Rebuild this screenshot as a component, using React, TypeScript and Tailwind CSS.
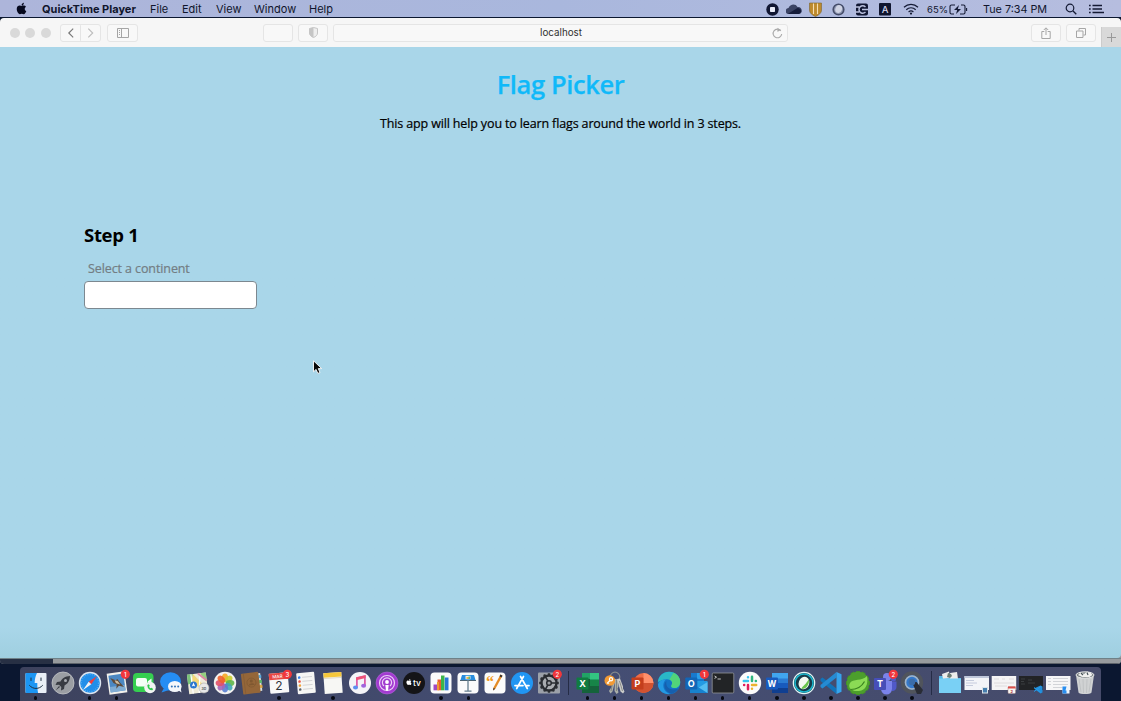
import React from "react";
import { FaApple } from "react-icons/fa";

const T = ({ x, y, s, f = "#fff", w = 700, children }: { x: number; y: number; s: number; f?: string; w?: number; children: React.ReactNode }) => (
  <text x={x} y={y} fontSize={s} fill={f} fontWeight={w} textAnchor="middle" fontFamily="Inter, sans-serif">{children}</text>
);

const Badge = ({ n }: { n: number }) => (
  <g>
    <circle cx="20.3" cy="3.3" r="4.6" fill="#f0373b" />
    <T x={20.3} y={5.6} s={6} w={500}>{n}</T>
  </g>
);

const petals = ["#f7a823", "#c9cf2d", "#5fb64a", "#3fa9b5", "#5a7fd0", "#a765b8", "#e2506a", "#f0602e"];
const teeth = [0, 30, 60, 90, 120, 150, 180, 210, 240, 270, 300, 330];

const icons: Record<string, React.ReactNode> = {
  finder: (
    <g>
      <rect x="1.5" y="2" width="21" height="20" rx="1" fill="#e9eff7" />
      <path d="M2.5 2H13c-1.500 3-2.300 6-2.300 10h2.600c0 4 .2 7 .8 10H2.500a1 1 0 0 1-1-1V3a1 1 0 0 1 1-1Z" fill="#1b95f3" />
      <path d="M5.500 14.500c3.500 4 9.500 4 13 0M7 7v2.500M17 7v2.500" stroke="#1d3043" strokeWidth="1" fill="none" strokeLinecap="round" />
    </g>
  ),
  launchpad: (
    <g>
      <circle cx="12" cy="12" r="11" fill="#9b9ea3" stroke="#c3c5c8" strokeWidth=".8" />
      <path d="M19 5c-5 .2-8 2.500-9.500 5.500L6 11l-1.500 3 3.500-.3 2.300 2.300-.3 3.500 3-1.500.5-3.500C16.500 13 18.800 10 19 5Z" fill="#383b42" />
      <circle cx="14.500" cy="9.500" r="1.500" fill="#a7aab0" />
      <path d="m8 15-3.500 4.500L9 16Z" fill="#383b42" />
    </g>
  ),
  safari: (
    <g>
      <circle cx="12" cy="12" r="11.200" fill="#dce5ef" />
      <circle cx="12" cy="12" r="9.800" fill="#218ee9" />
      <circle cx="12" cy="12" r="8.500" fill="none" stroke="#7dc4f6" strokeWidth="1.200" strokeDasharray=".5 1.700" />
      <path d="M19 5 13.300 13.300 10.700 10.700Z" fill="#f23e3c" />
      <path d="M5 19l5.700-8.300 2.600 2.600Z" fill="#f2f3f5" />
    </g>
  ),
  mail: (
    <g>
      <g transform="rotate(-8 12 12)">
        <rect x="3" y="1.500" width="18" height="21" fill="#f2f1ec" />
        <rect x="4.500" y="3.500" width="15" height="17" fill="#4b88c3" />
        <path d="M4.500 15h15v5.500h-15Z" fill="#80acd3" />
        <path d="m6 6 5 3 2-1 1.500 3 4 6-5-2-3 2.500 1-4-3-2Z" fill="#5d4a3b" />
        <path d="m10 9 3 1 2 4-4-2Z" fill="#cdbca0" />
      </g>
      <Badge n={1} />
    </g>
  ),
  facetime: (
    <g>
      <rect x="1" y="2" width="20.500" height="19" rx="4" fill="#35cf50" />
      <rect x="4" y="7" width="11" height="8.500" rx="2" fill="#f4fff6" />
      <path d="m15.500 10.500 4-3v7Z" fill="#f4fff6" />
      <circle cx="18" cy="16.500" r="5.800" fill="#f1f3f2" />
      <path d="M15.300 14c0 3.500 2 5.200 5 5.300l.9-1.400-1.800-1.200-1.100.6c-.8-.5-1-1-1.100-1.700l.6-.8-1-1.600Z" fill="#31c94c" />
    </g>
  ),
  messages: (
    <g>
      <ellipse cx="11.500" cy="10.500" rx="10.500" ry="9.300" fill="#258df3" />
      <path d="m5 17-2.500 4.500L10 19Z" fill="#258df3" />
      <ellipse cx="15.800" cy="15.500" rx="6.800" ry="5.500" fill="#f4f7fb" />
      <path d="m19 19 3.500 2.500-1-4.500Z" fill="#f4f7fb" />
      <circle cx="12.800" cy="15.500" r="1" fill="#3172b8" /><circle cx="16" cy="15.500" r="1" fill="#3172b8" /><circle cx="19.200" cy="15.500" r="1" fill="#3172b8" />
    </g>
  ),
  maps: (
    <g>
      <g transform="rotate(-7 12 12)">
        <rect x="2" y="2.500" width="19" height="19.500" fill="#efebd9" />
        <path d="M2 2.500h6l-3 9-3 1Z" fill="#7ac379" />
        <path d="M15 2.500h6v9Z" fill="#94cf7f" />
        <path d="M8 2.500 19 17l-2 3L6 11Z" fill="#f4d779" />
        <path d="M6 2.500v19.500M15 3l-3 19" stroke="#fff" strokeWidth="1.300" />
        <path d="m13 2.500 8 8" stroke="#dc8aa4" strokeWidth="2" />
      </g>
      <circle cx="7.500" cy="14" r="3.500" fill="#2b76cf" />
      <path d="m7.500 11.500 1.700 4-1.700-.8-1.700.8Z" fill="#fff" />
      <circle cx="18" cy="17" r="5" fill="#e8e8e8" stroke="#aaa" strokeWidth=".6" />
      <T x={18} y={18.500} s={3.500} f="#666">3D</T>
    </g>
  ),
  photos: (
    <g>
      <circle cx="12" cy="12" r="11.200" fill="#f3f2f0" />
      {petals.map((c, i) => (
        <ellipse key={c} cx="12" cy="6.900" rx="3.100" ry="4.300" fill={c} opacity=".9" transform={`rotate(${i * 45} 12 12)`} />
      ))}
    </g>
  ),
  contacts: (
    <g transform="rotate(-7 12 12)">
      <rect x="18" y="3" width="3.300" height="18" fill="#d9dcd9" />
      <path d="M19 5h3v3h-3Z" fill="#5aa7d8" /><path d="M19 10h3v3h-3Z" fill="#5dba6d" /><path d="M19 15h3v3h-3Z" fill="#dfa94a" />
      <rect x="2" y="1.500" width="17.500" height="21" rx="1" fill="#946639" />
      <path d="M4.500 2v20" stroke="#805a34" strokeWidth=".6" />
      <circle cx="11.500" cy="11.500" r="4.500" fill="none" stroke="#7f5831" strokeWidth=".7" />
      <circle cx="11.500" cy="10" r="1.500" fill="#7f5831" /><path d="M8.500 14c1-2.500 5-2.500 6 0Z" fill="#7f5831" />
    </g>
  ),
  calendar: (
    <g>
      <g transform="rotate(-5 12 12)">
        <rect x="2.500" y="2" width="19" height="20" rx="1" fill="#f8f8f8" />
        <path d="M2.500 2h19v6.500h-19Z" fill="#e94742" />
        <T x={11} y={7} s={4.500} w={500}>MAR</T>
      </g>
      <T x={12} y={18.800} s={12} f="#30343b" w={400}>2</T>
      <Badge n={3} />
    </g>
  ),
  reminders: (
    <g transform="rotate(-5 12 12)">
      <rect x="3" y="1.500" width="18" height="21" rx="1" fill="#f6f6f4" />
      <path d="M8.500 6h10M8.500 10h10M8.500 14h10M8.500 18h10" stroke="#c7c8ca" strokeWidth=".7" />
      <circle cx="5.700" cy="6" r="1.300" fill="#3680ed" /><circle cx="5.700" cy="10" r="1.300" fill="#eb5545" /><circle cx="5.700" cy="14" r="1.300" fill="#f2a33a" /><circle cx="5.700" cy="18" r="1.300" fill="#5b626b" />
    </g>
  ),
  notes: (
    <g transform="rotate(-4 12 12)">
      <rect x="3" y="1.500" width="18" height="21" fill="#f7f7f4" />
      <path d="M3 1.500h18v4.700H3Z" fill="#f5c73c" />
      <path d="M3 7h18" stroke="#c9bea0" strokeWidth=".5" />
    </g>
  ),
  music: (
    <g>
      <circle cx="12" cy="12" r="11" fill="#f4f4f7" />
      <path d="M8.900 16.500V7l8-2v9.500" fill="none" stroke="#dc55a5" strokeWidth="1.700" />
      <path d="m8.200 6.500 9.400-2.300v2.800L8.200 9.300Z" fill="#ee5376" />
      <ellipse cx="7.500" cy="16.500" rx="2.500" ry="2" fill="#5e8ff0" /><ellipse cx="15.600" cy="14.800" rx="2.500" ry="2" fill="#a065dc" />
    </g>
  ),
  podcasts: (
    <g>
      <circle cx="12" cy="12" r="11" fill="#a23bd0" stroke="#bf6ee3" strokeWidth=".5" />
      <circle cx="12" cy="12" r="7.500" fill="none" stroke="#ecd1f7" strokeWidth="1.200" />
      <path d="M9 15a4.600 4.600 0 1 1 6 0" fill="none" stroke="#ecd1f7" strokeWidth="1.200" />
      <circle cx="12" cy="11" r="1.900" fill="#fff" /><path d="M10.300 14h3.400L13 19.800h-2Z" fill="#fff" />
    </g>
  ),
  tv: (
    <g>
      <circle cx="12" cy="12" r="11" fill="#141417" />
      <FaApple x={3.500} y={7.500} width={7} height={7} size={7} color="#fff" />
      <T x={15} y={14.800} s={8.500} w={500}>tv</T>
    </g>
  ),
  numbers: (
    <g>
      <rect x="1.500" y="1.500" width="21" height="21" rx="4" fill="#fbfbfb" />
      <path d="M4.500 13.500h3.500v5.800H4.500Z" fill="#a34ac0" /><path d="M8.500 8.500h3.500v10.800H8.500Z" fill="#eb5d34" /><path d="M8 11h2v8.300H8Z" fill="#ee9b30" /><path d="M12 4.500h3.500v14.800H12Z" fill="#3cb54a" /><path d="M15.800 6.500h3.700v12.800h-3.700Z" fill="#2979d4" />
    </g>
  ),
  keynote: (
    <g>
      <rect x="1.500" y="1.500" width="21" height="21" rx="4" fill="#fbfbfb" />
      <path d="M6 4h12l1.500 5h-15Z" fill="#298cde" />
      <path d="M4 9.500h16" stroke="#4c6473" strokeWidth="1" />
      <path d="M12 9v11M8.500 20.200h7" stroke="#667e8e" strokeWidth="1.300" />
      <path d="M9.500 4.800h5v3.500h-5Z" fill="#e9f2ed" /><path d="M10.500 6h3v2h-3Z" fill="#f3b050" /><path d="M12.500 5.500h1.500v2.500h-1.500Z" fill="#5ebd75" />
    </g>
  ),
  pages: (
    <g>
      <rect x="1.500" y="1.500" width="21" height="21" rx="4" fill="#fbfbfb" />
      <text x="6.900" y="16" fontSize="16" fill="#f39a22" fontWeight="700" textAnchor="middle" fontFamily="Liberation Serif, serif">“</text>
      <path d="m17.500 3.500 2 1.200-7 12.800-2.300 2 .3-3Z" fill="#e48b25" /><path d="m16.500 5.300 2 1.200 1-1.800-2-1.200ZM10.400 17l-.2 2.500 2-1.800Z" fill="#343233" />
    </g>
  ),
  appstore: (
    <g>
      <circle cx="12" cy="12" r="11" fill="#2196f3" />
      <path d="m13.500 5.500-6.800 12M10.500 5.500l6.800 12M5 14.600h8M15.800 14.600H19" stroke="#fff" strokeWidth="1.700" strokeLinecap="round" />
    </g>
  ),
  settings: (
    <g>
      <rect x="1" y="1.500" width="22" height="21" rx="1" fill="#9ca1a9" />
      {teeth.map((a) => <path key={a} d="M10.800 2.200h2.400v3h-2.400Z" fill="#2e3135" transform={`rotate(${a} 12 12)`} />)}
      <circle cx="12" cy="12" r="7.500" fill="#a9acb0" stroke="#292c31" strokeWidth="2.400" />
      <path d="M12 12h7M12 12 8.500 5.900M12 12l-3.500 6.100" stroke="#292c31" strokeWidth="1.600" />
      <circle cx="12" cy="12" r="2.300" fill="#9a9da2" stroke="#292c31" strokeWidth="1.500" />
      <Badge n={2} />
    </g>
  ),
  excel: (
    <g>
      <path d="M7 2h17v20H7Z" fill="#21a366" /><path d="M7 8h8v14H7Z" fill="#185c37" /><path d="M15 2h9v6h-9Z" fill="#33c481" /><path d="M7 15h17v7H7Z" fill="#15633b" /><path d="M15 9h9v6h-9Z" fill="#178548" />
      <rect x="1.500" y="6.500" width="12" height="12" rx="1" fill="#107c41" />
      <T x={7.500} y={15.800} s={9}>X</T>
    </g>
  ),
  keychain: (
    <g>
      <circle cx="12" cy="6" r="4.800" fill="none" stroke="#85898c" strokeWidth="1.200" />
      <path d="m9 7 3.500 1.500-3 12-2 2-1.500-2.500L8.500 16ZM12 8l3 .5.500 7-1 2 1 4-2 1.500-2-3Z" fill="#aaaea8" />
      <path d="m14 8 3-.5 3 8 0 2 1.500 3-1.500 2-2.500-2Z" fill="#cbccca" /><path d="M13.500 9v11M10 10 8 20M16.500 10l3 10" stroke="#70716e" strokeWidth=".7" />
      <circle cx="6.800" cy="9.500" r="5.300" fill="#f29a34" />
      <circle cx="8" cy="8.300" r="1.600" fill="none" stroke="#fff" strokeWidth="1.200" /><path d="m7 9.500-3 3M5 11.500l1 1" stroke="#fff" strokeWidth="1.100" />
    </g>
  ),
  powerpoint: (
    <g>
      <circle cx="13.500" cy="12" r="10" fill="#ed6c47" /><path d="M13.500 2a10 10 0 0 1 10 10h-10Z" fill="#ff8f6b" /><path d="M3.500 12h20a10 10 0 0 1-20 0Z" fill="#d35230" />
      <rect x="1.500" y="6.500" width="12" height="12" rx="1" fill="#c43e1c" />
      <T x={7.500} y={15.800} s={9}>P</T>
    </g>
  ),
  edge: (
    <g>
      <circle cx="12" cy="12" r="11.200" fill="#1474c6" />
      <path d="M.9 11C1.500 5 6.200.8 12 .8c6.500 0 11.200 4.700 11.200 10.200 0 4-2.700 6-5.700 6-2.600 0-4-1.100-3-2.700 1.800-3-.3-6.100-4.500-6.100C6.200 8.200 3 10 .9 11Z" fill="#2ab8c6" />
      <path d="M16.500 1.700c5 2 7.500 7 6.500 10.800-1 3.500-3.500 4.500-5.500 4.500-2.600 0-4-1.100-3-2.700 1.400-2.500.5-4.800-2-5.700Z" fill="#52d479" />
      <path d="M1 13.500C2 10 5.500 8 9 8.500c-4.500 3.500-3.500 12 4 14.600C6 23.700 1 19 1 13.500Z" fill="#249ae3" />
      <path d="M9.500 10c-1.500 6 3.500 10.500 12 7.500-1.500 2.500-4.200 4.700-7 5.300-7-2-9.200-9.300-5-12.800Z" fill="#165fae" />
    </g>
  ),
  outlook: (
    <g>
      <path d="M7 2h13v12H7Z" fill="#1779ce" /><path d="M13 2h7v6h-7Z" fill="#2a9ee8" /><path d="M6 10h17.500v12H6Z" fill="#249be3" /><path d="M6 22 23.500 11v11Z" fill="#54bdf1" /><path d="m6 11 17.500 11H6Z" fill="#1782cf" />
      <rect x="1.300" y="6.500" width="12" height="12" rx="1" fill="#1266b7" />
      <T x={7.300} y={15.800} s={9}>O</T>
      <Badge n={1} />
    </g>
  ),
  terminal: (
    <g>
      <rect x="1.200" y="2" width="21.600" height="20" rx="1" fill="#222426" stroke="#929598" strokeWidth=".8" />
      <path d="m3.500 5 2 1.200-2 1.200M6.500 8h3.300" stroke="#eee" strokeWidth=".8" fill="none" />
    </g>
  ),
  slack: (
    <g>
      <circle cx="12" cy="12" r="11.200" fill="#fbfbfb" />
      <g fill="none" strokeWidth="2.500" strokeLinecap="round">
        <path d="M5.800 10H10M10 6.200v.1" stroke="#36c5f0" /><path d="M14 5.800V10M17.800 10h.1" stroke="#2eb67d" />
        <path d="M14 14h4.200M14 17.700v.1" stroke="#ecb22e" /><path d="M10 14v4.200M6.100 14h.1" stroke="#e01e5a" />
      </g>
    </g>
  ),
  word: (
    <g>
      <path d="M7 2h16v20H7Z" fill="#2b7cd3" /><path d="M7 2h16v5.500H7Z" fill="#41a5ee" /><path d="M7 12h16v5H7Z" fill="#185abd" /><path d="M7 17h16v5H7Z" fill="#103f91" />
      <rect x="1" y="6.500" width="12" height="12" rx="1" fill="#185abd" />
      <T x={7} y={15.600} s={8.500}>W</T>
    </g>
  ),
  webex: (
    <g>
      <circle cx="12" cy="12" r="10.700" fill="#173c4a" stroke="#e2f6f6" strokeWidth="1.200" />
      <circle cx="12" cy="12" r="9" fill="none" stroke="#1cb8cf" strokeWidth="1.500" />
      <ellipse cx="12" cy="12" rx="5.300" ry="6.300" fill="#f3f9f1" transform="rotate(20 12 12)" />
      <path d="M16.800 8c1.200 5-2.500 10.300-7.300 10 1-3.500 4.300-4 7.300-10Z" fill="#68c44c" />
    </g>
  ),
  vscode: (
    <g>
      <path d="m1.500 8 2-1.500L17.500 17.500V23L1.500 10Z" fill="#1174ba" /><path d="m1.500 16 2 1.500L17.500 6.500V1L1.500 14Z" fill="#258bd3" />
      <path d="m17.500 1 5 2.200v17.600l-5 2.200Z" fill="#36a4ec" />
    </g>
  ),
  spring: (
    <g>
      {teeth.map((a) => <path key={a} d="M10 0h4v4h-4Z" fill="#438e2a" transform={`rotate(${a} 12 12)`} />)}
      <circle cx="12" cy="12" r="11.200" fill="#4c9e2c" />
      <path d="M21 5c1.300 8-1 14.500-8 15-8 .8-11.500-4-9-8 3-4.700 12-1.500 17-7Z" fill="#8bdb55" />
      <path d="M4.500 18.500c7 0 11-2.500 14-8" fill="none" stroke="#39831f" strokeWidth="1.200" />
    </g>
  ),
  teams: (
    <g>
      <circle cx="14" cy="6" r="4" fill="#7b83eb" /><circle cx="20.500" cy="8" r="2.500" fill="#5059c9" />
      <path d="M8 10h11v8a5.500 5.500 0 0 1-11 0Z" fill="#7b83eb" /><path d="M19 10.500h4.500V16a4 4 0 0 1-4.500 4Z" fill="#5059c9" />
      <rect x="1" y="7" width="12" height="12" rx="1" fill="#464eb8" />
      <T x={7} y={16.200} s={9}>T</T>
      <Badge n={2} />
    </g>
  ),
  quicktime: (
    <g>
      <circle cx="12" cy="11.500" r="9.200" fill="#3c85d5" stroke="#50545c" strokeWidth="4" />
      <circle cx="12" cy="11.500" r="6.500" fill="#3579ca" stroke="#9fb3c8" strokeWidth="1.600" />
      <path d="M12 11h4.500l6.500 8-2 4h-4Z" fill="#292c35" />
      <circle cx="12" cy="11" r="3.300" fill="#3b6da9" />
    </g>
  ),
  folder: (
    <g>
      <path d="M1 5h8l2 2h12v15H1Z" fill="#53b5e6" />
      <path d="M4 3 11 .5 12 7 5 8ZM12 2l7-1 1 7h-8Z" fill="#edeceb" /><path d="m10 2 3 1 1 2-2 2-3-1Z" fill="#6d7c74" />
      <path d="M1 7.500h22V22H1Z" fill="#79d0f5" />
    </g>
  ),
  window1: (
    <g>
      <rect x="-.5" y="5" width="24.500" height="14" fill="#f3f4f8" /><path d="M-.5 5H24v2H-.5Z" fill="#bfc7da" /><path d="M1 9.500h8M1 12h11M1 14.500h7" stroke="#bac1d6" strokeWidth=".8" />
      <rect x="17" y="16" width="6" height="6.500" fill="#d9e2e8" /><path d="M18 17h4v4.500h-4Z" fill="#467eae" />
    </g>
  ),
  window2: (
    <g>
      <rect x="-.3" y="5" width="24.500" height="14" fill="#f5f4f5" /><path d="M2 8h5M10 8h3M17 8h5M2 12h20M3 15h12" stroke="#d8d5d7" strokeWidth=".8" />
      <rect x="16" y="15.500" width="7.500" height="7" rx="1" fill="#f7f7f5" stroke="#ac8582" strokeWidth=".5" /><path d="M16 15.500h7.500v2H16Z" fill="#dd4f4b" /><T x={19.700} y={21.500} s={4} f="#b43b3b">2</T>
    </g>
  ),
  window3: (
    <g>
      <rect x="0" y="5" width="24" height="14" fill="#222326" /><path d="M2 8h4M2 10.500h3M2 13h4M9 9h4M9 12h7" stroke="#4e5154" strokeWidth=".6" />
      <path d="m21.500 14.500 2 1v6l-2 1-6.500-5Z" fill="#228edb" /><path d="m15 16.500 7 5M15 20.500l7-5" stroke="#229be9" strokeWidth="1" />
    </g>
  ),
  window4: (
    <g>
      <rect x="0" y="5" width="24.500" height="14" fill="#f6f6f7" /><path d="M2 7.500h3M7 7.500h15M2 10.500h3M7 10.500h15M2 13.500h3M7 13.500h15M7 16.500h10" stroke="#c9cbcf" strokeWidth=".8" />
      <rect x="16.500" y="15.500" width="7" height="7" fill="#edf4fb" /><path d="M16.500 15.500h4l-1 4h1v3h-4Z" fill="#288def" />
    </g>
  ),
  trash: (
    <g>
      <path d="M3 4h18l-2.500 17.500c-1 2-12 2-13 0Z" fill="#d0d2d3" />
      <ellipse cx="12" cy="4" rx="9" ry="3.200" fill="#798083" stroke="#e5e6e7" strokeWidth="1" />
      <path d="m5 4 3-3 3 2 3-2.500L18 2l1.500 2-3 2H9Z" fill="#f0f0ef" /><path d="m8 2 2 2M14 1.500l1 2.500" stroke="#465257" strokeWidth="1.200" />
      <path d="m6 8 2 13M10 8l.5 14M14 8l-.5 14M18 8l-2 13" stroke="#b6b9bb" strokeWidth=".6" />
    </g>
  ),
};

const running = new Set("finder safari mail calendar notes numbers keynote excel keychain powerpoint edge outlook terminal slack word webex vscode spring teams quicktime".split(" "));
const apps = "finder launchpad safari mail facetime messages maps photos contacts calendar reminders notes music podcasts tv numbers keynote pages appstore settings".split(" ");
const work = "excel keychain powerpoint edge outlook terminal slack word webex vscode spring teams quicktime".split(" ");
const recent = "folder window1 window2 window3 window4 trash".split(" ");

const Group = ({ names }: { names: string[] }) => (
  <div className="flex">
    {names.map((n) => (
      <div key={n} className="flex w-[27.05px] flex-col items-center pt-[3.5px]">
        <svg className="h-6 w-6 overflow-visible" viewBox="0 0 24 24">{icons[n]}</svg>
        {running.has(n) && <span className="mt-[1.5px] size-[3.5px] shrink-0 rounded-full bg-[#080a14]" />}
      </div>
    ))}
  </div>
);

const Divider = () => <div className="flex w-[11px] justify-center pt-1"><span className="h-6 w-px bg-[#252c46]" /></div>;

const Slot = ({ w, children }: { w: string; children?: React.ReactNode }) => <div className={`flex h-full shrink-0 items-center justify-center ${w}`}>{children}</div>;

const MenuBar = () => (
  <header className="flex h-[17px] shrink-0 items-center bg-linear-to-r from-[#adb5da] via-[#a9b7dd] to-[#b6bddf] text-[11px] leading-[17px] text-[#10152c]">
    <Slot w="w-[42px]"><FaApple className="mb-px size-[13px] text-[#06091e]" /></Slot>
    <span className="w-[108px] whitespace-nowrap pt-px text-[11px] font-bold">QuickTime Player</span>
    <span className="w-[32px] pt-px">File</span>
    <span className="w-[34px] pt-px">Edit</span>
    <span className="w-[38px] pt-px">View</span>
    <span className="w-[55px] pt-px">Window</span>
    <span className="pt-px">Help</span>
    <div className="ml-auto flex h-full items-center pt-px">
      <Slot w="w-[21px]"><svg className="size-[13px]" viewBox="0 0 13 13"><circle cx="6.500" cy="6.500" r="6.200" fill="#111733" /><rect x="4" y="4" width="5" height="5" rx=".7" fill="#e9ecf8" /></svg></Slot>
      <Slot w="w-[22px]"><svg className="h-3 w-4" viewBox="0 0 16 12"><path d="M3 11a3 3 0 0 1-.5-6C4 1 9.500 0 11.500 4c3-.5 4.500 2 4.300 4.500A3 3 0 0 1 13 11Z" fill="#3a4364" /><path d="M2 10.800 11.500 5c3.500 0 5 4 1.500 6H3Z" fill="#151d3c" /></svg></Slot>
      <Slot w="w-[21px]"><svg className="h-[15px] w-[13px]" viewBox="0 0 13 15"><path d="M.5 1h12v7c0 3-2.500 5-6 6.500C3 13 .5 11 .5 8Z" fill="#bd8a2d" stroke="#7c642f" strokeWidth=".6" /><path d="M4.500 1.500V12M8.500 1.500V12" stroke="#f6ddb0" strokeWidth="1.100" /></svg></Slot>
      <Slot w="w-[24px]"><svg className="size-[13px]" viewBox="0 0 13 13"><circle cx="6.500" cy="6.500" r="5.300" fill="#8e96b1" stroke="#454d6a" strokeWidth="1.600" /><ellipse cx="6.500" cy="6" rx="3.300" ry="4" fill="#cfd3e3" transform="rotate(20 6.500 6.500)" /></svg></Slot>
      <Slot w="w-[23px]"><svg className="h-[13px] w-[14px]" viewBox="0 0 14 13"><rect x="1" y=".5" width="12" height="12" rx="2" fill="#111733" /><path d="M10.500 4C8 1.500 4 3 4 6.500s4 5 6.500 2.500M7 6.500h6M0 4h4M0 9h4" fill="none" stroke="#bac1de" strokeWidth="1.400" /></svg></Slot>
      <Slot w="w-[23px]"><svg className="h-[13px] w-3" viewBox="0 0 12 13"><rect width="12" height="12.500" rx="1" fill="#10162f" /><T x={6} y={9.800} s={9.500} f="#d7dcf0" w={500}>A</T></svg></Slot>
      <Slot w="w-[29px]"><svg className="h-3 w-4" viewBox="0 0 16 12"><path d="M1 4.200c4-3.800 10-3.800 14 0M3.300 6.700c2.700-2.600 6.700-2.600 9.400 0M5.600 9c1.500-1.300 3.300-1.300 4.800 0" fill="none" stroke="#141a34" strokeWidth="1.200" /><circle cx="8" cy="10.600" r="1.100" fill="#141a34" /></svg></Slot>
      <span className="w-[24px] whitespace-nowrap pl-0.5 text-[9.5px]">65%</span>
      <svg className="h-[11px] w-[19px]" viewBox="0 0 19 11"><path d="M6 1H2.500A1.500 1.500 0 0 0 1 2.500v6A1.500 1.500 0 0 0 2.500 10H5M12 1h2.500A1.500 1.500 0 0 1 16 2.500v6a1.500 1.500 0 0 1-1.500 1.500H11M17.600 4v3" fill="none" stroke="#141a34" strokeWidth="1.100" /><path d="M10 1 5 6h3.200L7 10l5-5H8.800Z" fill="#141a34" /></svg>
      <span className="ml-[15px] w-[77px] whitespace-nowrap text-[10.8px]">Tue 7:34 PM</span>
      <Slot w="w-[22px]"><svg className="size-3" viewBox="0 0 12 12"><circle cx="5" cy="5" r="3.800" fill="none" stroke="#141a34" strokeWidth="1.200" /><path d="m7.800 7.800 3.500 3.500" stroke="#141a34" strokeWidth="1.300" /></svg></Slot>
      <Slot w="w-[28px]"><svg className="h-[10px] w-[15px]" viewBox="0 0 15 10"><path d="M0 1.500h1.700M0 5h1.700M0 8.500h1.700M3.500 1.500H13M3.500 5H13M3.500 8.500H15" stroke="#141a34" strokeWidth="1.300" /></svg></Slot>
      <div className="w-[11px]" />
    </div>
  </header>
);

const box = "flex h-[18px] shrink-0 items-center justify-center rounded-[3px] border border-[#e5e5e5] bg-[#f8f8f8]";

const Toolbar = () => (
  <div className="flex h-[29px] shrink-0 items-center rounded-t-[4px] bg-[#f6f6f6]">
    <div className="ml-[9.500px] flex w-[50.500px] gap-[5.500px]">
      <span className="size-[10px] rounded-full bg-[#d9d9d9]" /><span className="size-[10px] rounded-full bg-[#d9d9d9]" /><span className="size-[10px] rounded-full bg-[#d9d9d9]" />
    </div>
    <div className={`${box} w-[41px]`}>
      <svg className="h-4 w-10" viewBox="0 0 40 16"><path d="m12.500 3.500-4.500 4.500 4.500 4.500" fill="none" stroke="#777" strokeWidth="1.200" /><path d="M20 0v16" stroke="#e3e3e3" /><path d="m28 3.500 4.500 4.500-4.500 4.500" fill="none" stroke="#bdbdbd" strokeWidth="1.200" /></svg>
    </div>
    <div className={`${box} ml-[6px] w-[31px]`}>
      <svg className="h-[10px] w-[12px]" viewBox="0 0 12 10"><path d="M.5.5h11v9H.5ZM4.500.5v9M2 2.500h1M2 4.500h1M2 6.500h1" fill="none" stroke="#a5a5a5" /></svg>
    </div>
    <div className={`${box} ml-[125px] w-[30px]`} />
    <div className={`${box} ml-[5px] w-[30px]`}>
      <svg className="h-[11px] w-[9px]" viewBox="0 0 9 11"><path d="M4.500.5 8.500 1.500v4.500c0 2-1.500 3.500-4 4.500C2 9.500.5 8 .5 6V1.500Z" fill="#eee" stroke="#c5c5c5" /><path d="M4.500.5v10C2 9.500.5 8 .5 6V1.500Z" fill="#c5c5c5" /></svg>
    </div>
    <div className={`${box} ml-[5px] w-[455px] pl-[16px] pr-1`}>
      <span className="flex-1 pt-px text-center text-[9.8px] leading-none text-[#303030]">localhost</span>
      <svg className="h-[12px] w-[11px]" viewBox="0 0 11 12"><path d="M8.800 3.800A4.300 4.300 0 1 0 9.700 7M5.500 3h3.300" fill="none" stroke="#aaa" strokeWidth="1.100" /><path d="M5.500.7 8.500 3l-3 2Z" fill="#aaa" /></svg>
    </div>
    <div className={`${box} ml-auto w-[30px]`}>
      <svg className="h-[12px] w-[10px]" viewBox="0 0 10 12"><path d="M3.300 4.500H.8v7h8.400v-7H6.700M5 8V1M2.800 3 5 .8 7.200 3" fill="none" stroke="#a6a6a6" /></svg>
    </div>
    <div className={`${box} ml-[5px] w-[30px]`}>
      <svg className="size-[10px]" viewBox="0 0 10 10"><path d="M3 2.500v-2h6.500V7h-2M.5 3H7v6.500H.5Z" fill="none" stroke="#a6a6a6" /></svg>
    </div>
    <div className="ml-[5px] flex h-[20px] w-[20px] items-center justify-center self-end border-l border-[#ccc] bg-[#d9d9d9]">
      <svg className="size-[9px]" viewBox="0 0 9 9"><path d="M4.500 0v9M0 4.500h9" stroke="#999" /></svg>
    </div>
  </div>
);

export default function App() {
  return (
    <div className="flex h-[701px] w-[1121px] flex-col overflow-hidden bg-[#0b1730] font-[Inter,sans-serif]">
      <MenuBar />
      <div className="mt-px flex h-[646px] shrink-0 flex-col overflow-hidden rounded-[4px] bg-[#8d9397]">
        <Toolbar />
        <main className="relative flex h-[611px] shrink-0 flex-col rounded-br-[4px] bg-[#a9d6e9] bg-linear-to-b from-[#a9d6e9] from-95% to-[#9fcfe0] font-['Open_Sans',sans-serif]">
          <h1 className="mt-[18px] h-[38px] text-center text-[25.5px] font-semibold leading-[38px] tracking-[-0.4px] text-[#10b9f9] [-webkit-text-stroke:0.25px_#10b9f9]">Flag Picker</h1>
          <p className="mt-[12px] text-center text-[12.5px] font-medium leading-[18px] tracking-[-0.14px] text-black [-webkit-text-stroke:0.2px_#000]">This app will help you to learn flags around the world in 3 steps.</p>
          <section className="ml-[84px] mt-[86px] w-[173px]">
            <h2 className="h-[32px] text-[18.5px] font-bold leading-[32px] tracking-[-0.3px] text-black">Step 1</h2>
            <label className="mt-[9px] block h-[18px] pl-[4px] text-[12.5px] leading-[18px] tracking-[-0.1px] text-[#737d83] [-webkit-text-stroke:0.2px_#737d83]">Select a continent</label>
            <input className="mt-[3px] block h-[28px] w-[173px] rounded-[4px] border border-[#7c8890] bg-white px-2 text-xs outline-none" />
          </section>
          <svg className="absolute left-[312px] top-[313px] h-[15px] w-[11px]" viewBox="0 0 11 15"><path d="M1.500.8v11l2.600-2.400 1.700 4 2.200-.9-1.700-3.900h3.400Z" fill="#080808" stroke="#fff" strokeWidth=".9" /></svg>
        </main>
        <div className="flex h-[6px] shrink-0 border-t border-[#6f8188]"><span className="w-[53px] bg-[#273044]" /><span className="flex-1 border-b border-[#5d6269] bg-[#979b9e]" /></div>
      </div>
      <footer className="mx-auto mt-[3px] flex h-[34px] w-[1081px] shrink-0 rounded-t-[4px] bg-linear-to-r from-[#3d425d] via-[#444e74] to-[#464b6a] pl-[2px]">
        <Group names={apps} />
        <Divider />
        <Group names={work} />
        <Divider />
        <Group names={recent} />
      </footer>
    </div>
  );
}
